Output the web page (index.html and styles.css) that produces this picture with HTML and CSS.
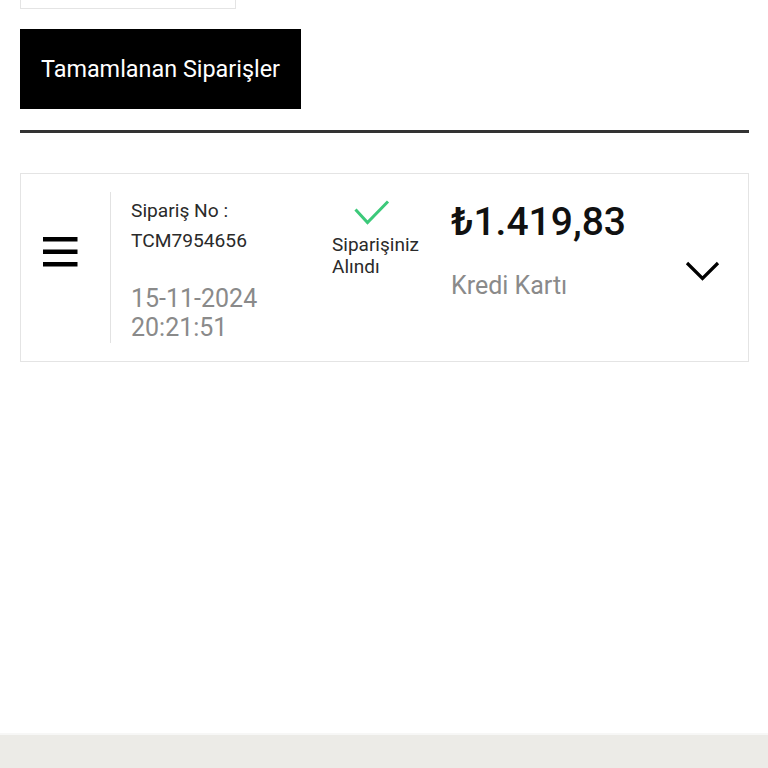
FILE: index.html
```html
<!DOCTYPE html>
<html lang="tr">
<head>
<meta charset="utf-8">
<link rel="stylesheet" href="styles.css">
</head>
<body>
<div class="page">
  <div class="top-box"></div>
  <div class="tab-btn">Tamamlanan Siparişler</div>
  <div class="rule"></div>
  <div class="card">
    <div class="menu">
      <svg width="35" height="30" viewBox="0 0 35 30"><rect x="0" y="0" width="34.5" height="4.5" fill="#000"/><rect x="0" y="12.5" width="34.5" height="4.5" fill="#000"/><rect x="0" y="25" width="34.5" height="4.5" fill="#000"/></svg>
    </div>
    <div class="info">
      <div class="label">Sipariş No :</div>
      <div class="label">TCM7954656</div>
      <div class="date">15-11-2024<br>20:21:51</div>
    </div>
    <div class="status">
      <svg class="check" width="36" height="26" viewBox="0 0 36 26"><path d="M1.5 9.5 L13.5 22.5 L34 1.5" fill="none" stroke="#3cc97a" stroke-width="3"/></svg>
      <div class="status-text">Siparişiniz<br>Alındı</div>
    </div>
    <div class="amount">
      <div class="price">₺1.419,83</div>
      <div class="method">Kredi Kartı</div>
    </div>
    <div class="chev">
      <svg width="35" height="21" viewBox="0 0 35 21"><path d="M2 2 L17.5 17.5 L33 2" fill="none" stroke="#000" stroke-width="3.2"/></svg>
    </div>
  </div>
  <div class="spacer"></div>
  <div class="footer"></div>
</div>
</body>
</html>
```
FILE: styles.css
```css
html, body {
  margin: 0;
  padding: 0;
  background: #fff;
}
body {
  font-family: Roboto, "Liberation Sans", sans-serif;
  color: #222;
}
.page {
  width: 768px;
  height: 768px;
  display: flex;
  flex-direction: column;
  overflow: hidden;
}
.top-box {
  margin-left: 20px;
  width: 214px;
  height: 8px;
  border: 1px solid #e4e4e4;
  border-top: none;
}
.tab-btn {
  margin: 20px 0 0 20px;
  width: 281px;
  height: 80px;
  box-sizing: border-box;
  padding-left: 21px;
  background: #000;
  color: #fff;
  font-size: 23.4px;
  line-height: 80px;
}
.rule {
  margin: 21px 19px 0 20px;
  height: 3px;
  background: #333;
}
.card {
  margin: 40px 19px 0 20px;
  height: 189px;
  box-sizing: border-box;
  border: 1px solid #e4e4e4;
  padding: 18px 0 18px 0;
  display: flex;
  align-items: stretch;
}
.menu {
  width: 89px;
  padding-top: 45px;
  padding-left: 22px;
  box-sizing: border-box;
}
.menu svg { display: block; }
.info {
  width: 222px;
  box-sizing: border-box;
  border-left: 1px solid #e2e2e2;
  padding-left: 20px;
  padding-top: 4px;
}
.label {
  font-size: 19.2px;
  line-height: 30px;
  color: #2a2a2a;
}
.date {
  margin-top: 28px;
  font-size: 25px;
  line-height: 29px;
  color: #8a8a8a;
}
.status {
  width: 119px;
  padding-top: 8px;
}
.check {
  display: block;
  margin-left: 22px;
}
.status-text {
  margin-top: 8px;
  font-size: 19px;
  line-height: 22px;
  color: #2a2a2a;
}
.amount {
  flex: 1;
}
.price {
  font-size: 39px;
  font-weight: 500;
  line-height: 60px;
  color: #111;
}
.method {
  margin-top: 19px;
  font-size: 25px;
  line-height: 30px;
  color: #8a8a8a;
}
.chev {
  width: 64px;
  padding-top: 69px;
}
.chev svg { display: block; margin-left: 1px; }
.spacer { flex: 1; }
.footer {
  height: 33px;
  border-top: 2px solid #f7f7f6;
  background: #ecebe7;
}
```
